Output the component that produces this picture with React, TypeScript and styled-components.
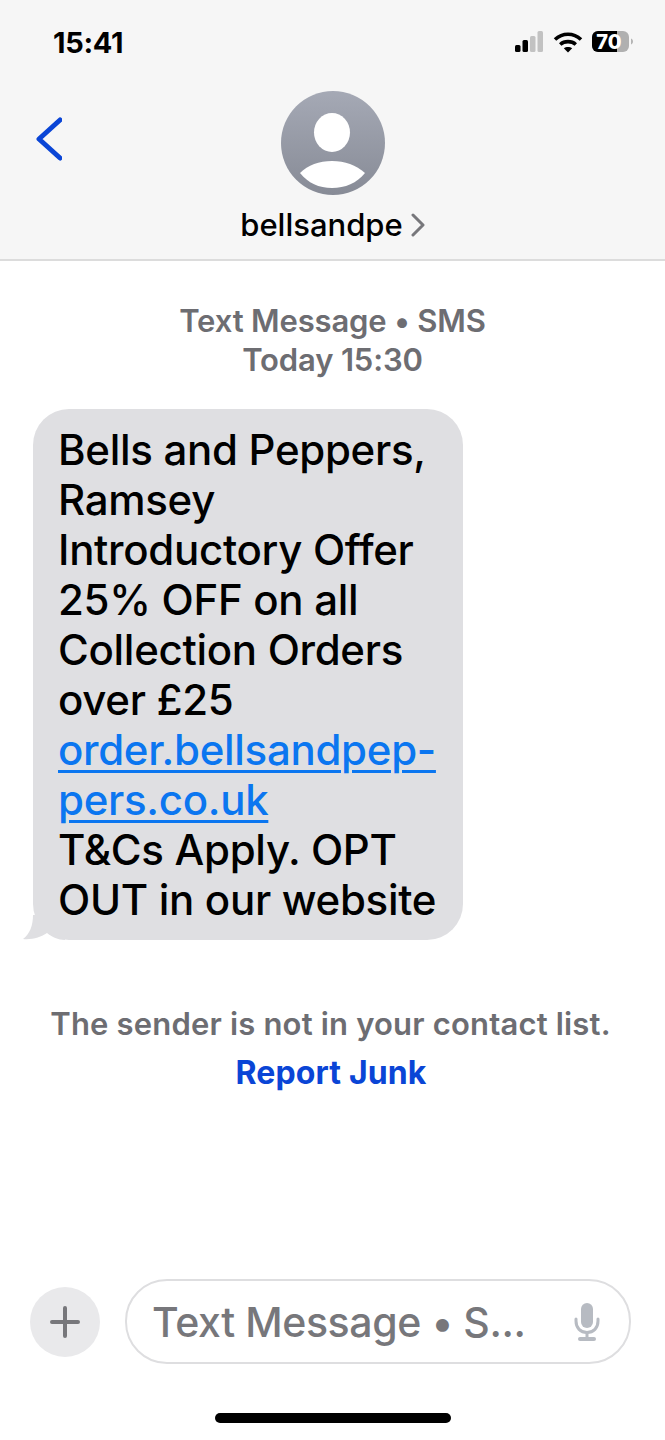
// App.tsx
import React from 'react';
import styled, { createGlobalStyle } from 'styled-components';

const GlobalStyle = createGlobalStyle`
  html, body {
    margin: 0;
    padding: 0;
    background: #fff;
  }
  body {
    font-family: Inter, "Liberation Sans", sans-serif;
  }
`;

const Screen = styled.div`
  width: 665px;
  height: 1440px;
  display: flex;
  flex-direction: column;
  overflow: hidden;
  background: #fff;
`;

const Header = styled.header`
  height: 261px;
  flex-shrink: 0;
  padding: 0 31px 0 35px;
  box-sizing: border-box;
  background: #f6f6f6;
  border-bottom: 2px solid #dcdcdc;
  display: flex;
  flex-direction: column;
`;

const StatusBar = styled.div`
  height: 84px;
  flex-shrink: 0;
  display: flex;
  align-items: center;
  justify-content: space-between;
  padding-left: 18px;
`;

const Clock = styled.span`
  font-size: 29px;
  font-weight: 700;
  letter-spacing: -0.3px;
  color: #000;
`;

const StatusIcons = styled.div`
  display: flex;
  align-items: center;
  gap: 9px;
`;

const Contact = styled.div`
  position: relative;
  display: flex;
  flex-direction: column;
  align-items: center;
  padding-top: 7px;
  margin-left: -35px;
  margin-right: -31px;
`;

const BackButton = styled.div`
  position: absolute;
  left: 32px;
  top: 32px;
  display: flex;
`;

const NameRow = styled.div`
  margin-top: 12px;
  display: flex;
  align-items: center;
  gap: 8px;
`;

const Name = styled.span`
  font-size: 31px;
  font-weight: 500;
  line-height: 36px;
  color: #000;
`;

const Thread = styled.main`
  flex: 1;
  display: flex;
  flex-direction: column;
`;

const Meta = styled.div`
  margin-top: 40px;
  text-align: center;
  font-size: 31px;
  font-weight: 600;
  line-height: 39px;
  letter-spacing: -0.15px;
  color: #6d6d72;
`;

const BubbleWrap = styled.div`
  position: relative;
  align-self: flex-start;
  margin: 30px 0 0 33px;
`;

const Bubble = styled.div`
  width: 430px;
  height: 531px;
  box-sizing: border-box;
  padding: 16px 0 0 25px;
  background: #dfdfe2;
  border-radius: 36px;
  font-size: 42px;
  font-weight: 500;
  line-height: 50px;
  letter-spacing: -0.3px;
  color: #000;
`;

const BubbleLine = styled.div`
  white-space: nowrap;
`;

const BubbleLink = styled.span`
  display: block;
  color: #0b76f0;
  text-decoration: underline;
  text-decoration-thickness: 3px;
  text-underline-offset: 5px;
  white-space: nowrap;
`;

const BubbleTail = styled.svg`
  position: absolute;
  left: -10px;
  bottom: 0;
`;

const Notice = styled.div`
  margin-top: 64px;
  padding-right: 4px;
  text-align: center;
  font-size: 31px;
  font-weight: 600;
  line-height: 40px;
  letter-spacing: 0.18px;
  color: #6d6d72;
`;

const ReportLink = styled.div`
  margin-top: 9px;
  padding-right: 3px;
  text-align: center;
  font-size: 32px;
  font-weight: 700;
  line-height: 40px;
  letter-spacing: 0.15px;
  color: #0a45d6;
`;

const Composer = styled.div`
  margin-top: auto;
  display: flex;
  align-items: center;
  gap: 25px;
  padding: 0 34px 0 30px;
`;

const PlusButton = styled.div`
  width: 70px;
  height: 70px;
  flex-shrink: 0;
  border-radius: 50%;
  background: #e9e9eb;
  display: flex;
  align-items: center;
  justify-content: center;
`;

const Field = styled.div`
  flex: 1;
  height: 85px;
  box-sizing: border-box;
  border: 2px solid #dedee0;
  border-radius: 42px;
  padding: 0 28px 0 25px;
  display: flex;
  align-items: center;
  justify-content: space-between;
`;

const Placeholder = styled.span`
  font-size: 41px;
  font-weight: 500;
  letter-spacing: -0.4px;
  color: #77777b;
`;

const HomeBarRow = styled.div`
  height: 76px;
  flex-shrink: 0;
  display: flex;
  justify-content: center;
  padding-top: 49px;
  box-sizing: border-box;
`;

const HomeBar = styled.div`
  width: 236px;
  height: 10px;
  border-radius: 5px;
  background: #000;
`;

const SignalIcon = () => (
  <svg width="30" height="22" viewBox="0 0 30 22">
    <rect x="1" y="14" width="5.5" height="7" rx="1.5" fill="#000" />
    <rect x="8.5" y="9" width="5.5" height="12" rx="1.5" fill="#000" />
    <rect x="16" y="5" width="5.5" height="16" rx="1.5" fill="#c2c2c2" />
    <rect x="23.5" y="0" width="5.5" height="21" rx="1.5" fill="#c2c2c2" />
  </svg>
);

const WifiIcon = () => (
  <svg width="30" height="22" viewBox="0 0 30 22" fill="none" stroke="#000" strokeWidth="3.6">
    <path d="M2 8.5C9.5 1.5 20.5 1.5 28 8.5" />
    <path d="M7.2 13.5C11.5 9.7 18.5 9.7 22.8 13.5" />
    <path d="M15 21.5L10.8 17.3C13 15.4 17 15.4 19.2 17.3Z" fill="#000" stroke="none" />
  </svg>
);

const BatteryIcon = () => (
  <svg width="42" height="22" viewBox="0 0 42 22">
    <rect x="0" y="0" width="37" height="21" rx="6" fill="#b0b0b0" />
    <path d="M6 0H25V21H6A6 6 0 0 1 0 15V6A6 6 0 0 1 6 0Z" fill="#000" />
    <path d="M39 7.5C40.4 8 41 9.2 41 10.5C41 11.8 40.4 13 39 13.5Z" fill="#b5b5b5" />
    <text x="17" y="18" textAnchor="middle" fontFamily="Inter, sans-serif" fontSize="20" fontWeight="800" fill="#fff">70</text>
  </svg>
);

const BackIcon = () => (
  <svg width="30" height="48" viewBox="0 0 30 48" fill="none">
    <path d="M28 4L7 23L28 42" stroke="#0a45d6" strokeWidth="5" strokeLinecap="round" strokeLinejoin="round" />
  </svg>
);

const AvatarIcon = () => (
  <svg width="104" height="104" viewBox="0 0 104 104">
    <defs>
      <linearGradient id="avatarFill" x1="0" y1="0" x2="0" y2="1">
        <stop offset="0" stopColor="#a5a9b5" />
        <stop offset="1" stopColor="#878b96" />
      </linearGradient>
    </defs>
    <circle cx="52" cy="52" r="52" fill="url(#avatarFill)" />
    <ellipse cx="51" cy="41.5" rx="18" ry="19.5" fill="#fff" />
    <path d="M19 82C27 74 38 70 51 70C64 70 75 74 84 82C76 92 64 97 51 97C38 97 27 92 19 82Z" fill="#fff" />
  </svg>
);

const NameChevron = () => (
  <svg width="14" height="24" viewBox="0 0 14 24" fill="none">
    <path d="M2 2L12 12L2 22" stroke="#77777b" strokeWidth="3" strokeLinecap="round" strokeLinejoin="round" />
  </svg>
);

const PlusIcon = () => (
  <svg width="30" height="38" viewBox="0 0 30 38" fill="none">
    <path d="M15 5V33M2 19H28" stroke="#77777b" strokeWidth="4" strokeLinecap="round" />
  </svg>
);

const MicIcon = () => (
  <svg width="28" height="38" viewBox="0 0 28 38" fill="none">
    <rect x="8" y="0" width="12" height="25" rx="6" fill="#b7bbc2" />
    <path d="M3 16V18C3 25 7.5 29.5 14 29.5C20.5 29.5 25 25 25 18V16" stroke="#b7bbc2" strokeWidth="3" strokeLinecap="round" />
    <path d="M14 29.5V35" stroke="#b7bbc2" strokeWidth="3" />
    <path d="M7 36H21" stroke="#b7bbc2" strokeWidth="4" strokeLinecap="round" />
  </svg>
);

const App: React.FC = () => {
  return (
    <Screen>
      <GlobalStyle />
      <Header>
        <StatusBar>
          <Clock>15:41</Clock>
          <StatusIcons>
            <SignalIcon />
            <WifiIcon />
            <BatteryIcon />
          </StatusIcons>
        </StatusBar>
        <Contact>
          <BackButton>
            <BackIcon />
          </BackButton>
          <AvatarIcon />
          <NameRow>
            <Name>bellsandpe</Name>
            <NameChevron />
          </NameRow>
        </Contact>
      </Header>

      <Thread>
        <Meta>
          Text Message • SMS
          <br />
          Today 15:30
        </Meta>
        <BubbleWrap>
          <BubbleTail width="42" height="25" viewBox="0 0 42 25">
            <path d="M10 0C10 10 7 19 0 24C9 25 18 22 24 18C29 22 35 25 42 25V0Z" fill="#dfdfe2" />
          </BubbleTail>
          <Bubble>
            <BubbleLine>Bells and Peppers,</BubbleLine>
            <BubbleLine>Ramsey</BubbleLine>
            <BubbleLine>Introductory Offer</BubbleLine>
            <BubbleLine>25% OFF on all</BubbleLine>
            <BubbleLine>Collection Orders</BubbleLine>
            <BubbleLine>over £25</BubbleLine>
            <BubbleLink>order.bellsandpep-</BubbleLink>
            <BubbleLink>pers.co.uk</BubbleLink>
            <BubbleLine>T&amp;Cs Apply. OPT</BubbleLine>
            <BubbleLine>OUT in our website</BubbleLine>
          </Bubble>
        </BubbleWrap>
        <Notice>The sender is not in your contact list.</Notice>
        <ReportLink>Report Junk</ReportLink>

        <Composer>
          <PlusButton>
            <PlusIcon />
          </PlusButton>
          <Field>
            <Placeholder>Text Message • S...</Placeholder>
            <MicIcon />
          </Field>
        </Composer>
        <HomeBarRow>
          <HomeBar />
        </HomeBarRow>
      </Thread>
    </Screen>
  );
};

export default App;
